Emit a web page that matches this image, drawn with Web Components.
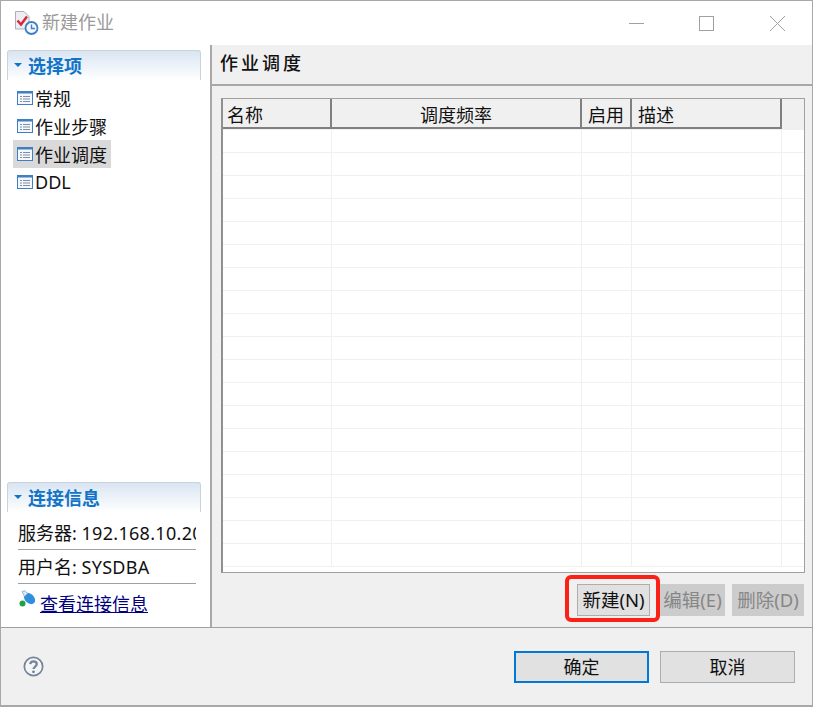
<!DOCTYPE html>
<html>
<head>
<meta charset="utf-8">
<title>新建作业</title>
<style>
  html, body { margin: 0; padding: 0; background: #fff; }
  body { font: 18px "Noto Sans", "Noto Sans CJK SC", sans-serif; color: #111; }
</style>
</head>
<body>
<job-dialog>
  <side-section slot="top" label="选择项">
    <nav-item>常规</nav-item>
    <nav-item>作业步骤</nav-item>
    <nav-item selected>作业调度</nav-item>
    <nav-item>DDL</nav-item>
  </side-section>
  <side-section slot="bottom" label="连接信息">
    <conn-info></conn-info>
  </side-section>
  <sched-table slot="main"></sched-table>
</job-dialog>

<script>
// small helper so each component only has to give its html
class Base extends HTMLElement {
  constructor() {
    super();
    this.attachShadow({ mode: "open" });
    this.shadowRoot.innerHTML = this.render();
  }
}

class DlgButton extends Base {
  render() {
    return `
    <style>
      :host { display: block; box-sizing: border-box; height: 32px; border: 1px solid #adadad; background: #e1e1e1;
        font-size: 18px; line-height: 29px; text-align: center; white-space: nowrap; color: #111; }
      :host([small]) { font-size: 18.5px; }
      :host([disabled]) { background: #cccccc; border-color: #cccccc; color: #868686; }
      :host([primary]) { border: 2px solid #0078d7; line-height: 27px; }
    </style>
    <slot></slot>`;
  }
}
customElements.define("dlg-button", DlgButton);

class NavItem extends Base {
  render() {
    return `
    <style>
      :host { display: flex; align-items: center; box-sizing: border-box; height: 28px; padding: 0 4px; width: fit-content; font-size: 18px; }
      :host([selected]) { background: #d9d9d9; }
      svg { width: 16px; height: 14px; margin-right: 2px; flex: none; }
    </style>
    <svg viewBox="0 0 16 14">
      <rect x="0.5" y="0.5" width="15" height="13" fill="#f4f8fc" stroke="#3f7fc4"/>
      <rect x="0" y="0" width="16" height="2.5" fill="#3f7fc4"/>
      <path d="M3 5.5h2M3 8h2M3 10.5h2M6 5.5h7M6 8h7M6 10.5h7" stroke="#7d8fa5" fill="none"/>
    </svg>
    <slot></slot>`;
  }
}
customElements.define("nav-item", NavItem);

class SideSection extends Base {
  render() {
    return `
    <style>
      :host { display: block; }
      .head { display: flex; align-items: center; box-sizing: border-box; height: 30px; margin: 0 9px 0 6px; padding: 0 0 2px 6px;
        border: 1px solid #c9d3de; border-bottom: 0; border-radius: 3px 3px 0 0;
        background: linear-gradient(#d9e5f2, #ffffff);
        color: #1273c8; font-weight: 700; font-size: 18px; }
      .head i { width: 0; height: 0; border: 4px solid transparent; border-top: 4px solid #1273c8; border-bottom: 0; margin-right: 6px; }
      .body { padding: 4px 0 0 12px; }
    </style>
    <div class="head"><i></i><span>${this.getAttribute("label")}</span></div>
    <div class="body"><slot></slot></div>`;
  }
}
customElements.define("side-section", SideSection);

class ConnInfo extends Base {
  render() {
    return `
    <style>
      :host { display: block; width: 178px; margin-left: 5px; font-size: 18px; }
      .row { height: 33px; line-height: 35px; border-bottom: 1px solid #a0a0a0; overflow: hidden; white-space: nowrap; }
      .ip { letter-spacing: .3px; }
      .link { display: flex; align-items: center; height: 38px; padding-left: 1px; }
      a { color: #000080; text-decoration: underline; margin-left: 5px; }
      svg { width: 16px; height: 18px; flex: none; margin-top: -8px; }
    </style>
    <div class="row">服务器: <span class="ip">192.168.10.20</span></div>
    <div class="row">用户名: <span class="ip">SYSDBA</span></div>
    <div class="link">
      <svg viewBox="0 0 16 18">
        <ellipse cx="10.5" cy="8.5" rx="6.5" ry="4.6" transform="rotate(45 10.5 8.5)" fill="#2f8fdc"/>
        <path d="M3 1.5 L6 0.8 L8.5 3.5 L5.5 6.5 Z" fill="#dbe9f6" stroke="#7fa9cf" stroke-width=".8"/>
        <circle cx="3.5" cy="13.5" r="3" fill="#1da24a"/>
      </svg>
      <a href="#">查看连接信息</a>
    </div>`;
  }
}
customElements.define("conn-info", ConnInfo);

class SchedTable extends Base {
  render() {
    const rows = Array.from({ length: 19 }, () =>
      `<div class="row"><span></span><span></span><span></span><span></span></div>`).join("");
    return `
    <style>
      :host { display: block; box-sizing: border-box; height: 475px; margin: 12px 7px 0 9px; border: 1px solid #a0a0a0; border-left: 2px solid #909090; background: #fff; overflow: hidden; }
      .cols { display: grid; grid-template-columns: 109px 250px 50px 150px 1fr; }
      .head { height: 31px; background: #f0f0f0; font-size: 18px; line-height: 33px; }
      .head div { box-sizing: border-box; border-right: 2px solid #808080; border-bottom: 2px solid #808080; padding-left: 6px; white-space: nowrap; height: 30px; }
      .head div.n { padding-left: 4px; }
      .head div.c { text-align: center; padding-left: 0; }
      .head div.e { border: 0; }
      .row { display: grid; grid-template-columns: 109px 250px 50px 150px 1fr; height: 23px; box-sizing: border-box; border-bottom: 1px solid #f0f0f0; }
      .row span { border-right: 1px solid #f0f0f0; }
    </style>
    <div class="cols head">
      <div class="n">名称</div><div class="c">调度频率</div><div>启用</div><div>描述</div><div class="e"></div>
    </div>
    ${rows}`;
  }
}
customElements.define("sched-table", SchedTable);

class JobDialog extends Base {
  render() {
    return `
    <style>
      :host { display: flex; flex-direction: column; position: relative; box-sizing: border-box; width: 813px; height: 707px;
        border: 1px solid #a8a8a8; border-width: 1px 1px 2px 1px; background: #fff; }
      .title { display: flex; align-items: center; height: 44px; flex: none; padding-left: 13px; color: #9a9a9a; font-size: 18px; }
      .title .name { margin-left: 3px; margin-top: -4px; }
      .title > svg { margin-top: -1px; }
      .win { margin-left: auto; display: flex; margin-right: -1px; }
      .win svg { display: block; width: 70px; height: 44px; }
      .mid { display: grid; grid-template-columns: 211px 1fr; height: 582px; flex: none; border-bottom: 1px solid #a0a0a0; }
      .left { display: flex; flex-direction: column; justify-content: space-between; border-right: 2px solid #a8a8a8; padding: 5px 0 5px; background: #fff; }
      .right { background: #f0f0f0; display: flex; flex-direction: column; min-width: 0; }
      .page { height: 41px; flex: none; box-sizing: border-box; border-bottom: 2px solid #a8a8a8; padding-left: 8px; font-size: 18px; font-weight: 500; line-height: 36px; letter-spacing: 3px; }
      .acts { display: flex; justify-content: flex-end; margin-top: 11px; padding-right: 8px; position: relative; }
      .acts dlg-button { width: 65px; }
      .acts dlg-button:first-child { width: 73px; margin-right: 10px; }
      .acts dlg-button:nth-child(3) { width: 72px; margin-left: 7px; }
      .mark { position: absolute; left: 353px; top: -9px; width: 95px; height: 47px; box-sizing: border-box; border: 4px solid #fb2116; border-radius: 6px; }
      .foot { flex: 1; background: #f0f0f0; display: flex; align-items: center; padding: 0 17px 0 22px; }
      .foot svg { width: 21px; height: 21px; margin-right: auto; margin-top: -1px; }
      .foot dlg-button { width: 135px; line-height: 30px; }
      .foot dlg-button[primary] { line-height: 28px; }
      .foot dlg-button + dlg-button { margin-left: 11px; }
    </style>
    <div class="title">
      <svg width="25" height="25" viewBox="0 0 25 25">
        <path d="M1.5 1.5H10L15 6.5V19H1.5Z" fill="#eceef3" stroke="#a9afbd"/>
        <path d="M3.5 10.5l3.5 4 6-8" fill="none" stroke="#d62839" stroke-width="2.4"/>
        <circle cx="17.5" cy="18" r="6" fill="#f4f8fc" stroke="#3f7fc4" stroke-width="1.8"/>
        <path d="M17.5 14.5v4h3.5" fill="none" stroke="#3f7fc4" stroke-width="1.4"/>
      </svg>
      <span class="name">新建作业</span>
      <div class="win">
        <svg viewBox="0 0 70 44"><path d="M28 22.5h15" stroke="#a0a0a0" fill="none"/></svg>
        <svg viewBox="0 0 70 44"><rect x="28.5" y="15.5" width="14" height="14" stroke="#a0a0a0" fill="none"/></svg>
        <svg viewBox="0 0 70 44" style="width:72px"><path d="M28 15l15 15M43 15L28 30" stroke="#a0a0a0" fill="none"/></svg>
      </div>
    </div>
    <div class="mid">
      <div class="left">
        <div><slot name="top"></slot></div>
        <div><slot name="bottom"></slot></div>
      </div>
      <div class="right">
        <div class="page">作业调度</div>
        <slot name="main"></slot>
        <div class="acts">
          <dlg-button small>新建(N)</dlg-button>
          <dlg-button small disabled>编辑(E)</dlg-button>
          <dlg-button small disabled>删除(D)</dlg-button>
          <div class="mark"></div>
        </div>
      </div>
    </div>
    <div class="foot">
      <svg viewBox="0 0 22 22">
        <circle cx="11" cy="11" r="9.6" fill="#f4f5f7" stroke="#76849b" stroke-width="1.8"/>
        <path d="M7.6 8.6C7.8 6.6 9.2 5.6 11 5.6c2 0 3.4 1.2 3.4 2.9 0 2.6-3.3 2.6-3.3 5.2" fill="none" stroke="#76849b" stroke-width="2.4"/>
        <circle cx="11" cy="16.6" r="1.5" fill="#76849b"/>
      </svg>
      <dlg-button primary>确定</dlg-button>
      <dlg-button>取消</dlg-button>
    </div>`;
  }
}
customElements.define("job-dialog", JobDialog);
</script>
</body>
</html>
